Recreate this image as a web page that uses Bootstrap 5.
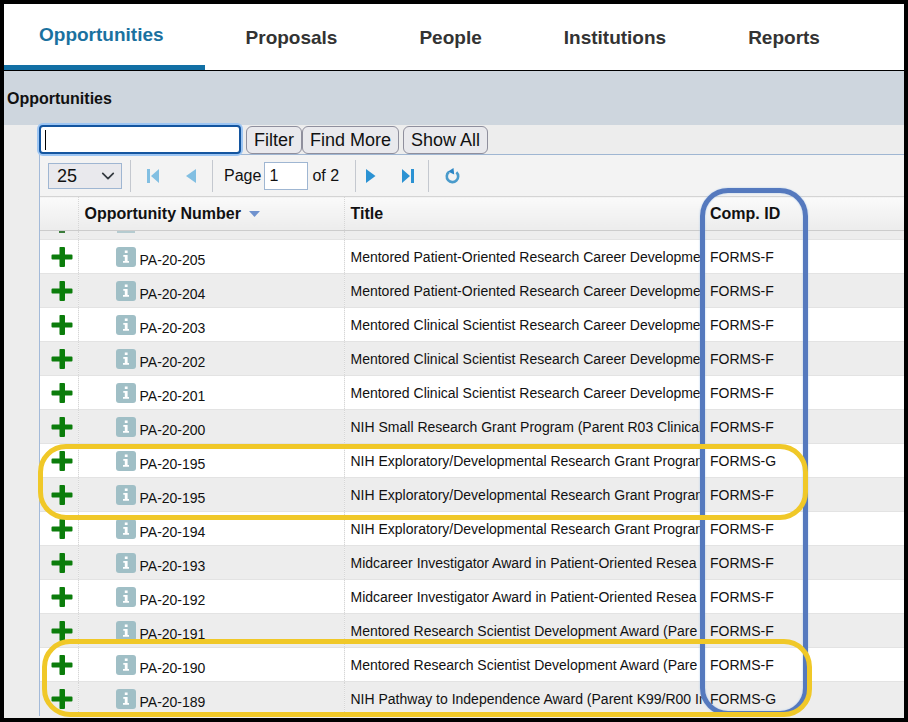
<!DOCTYPE html>
<html lang="en">
<head>
<meta charset="utf-8">
<meta name="viewport" content="width=device-width, initial-scale=1">
<title>Opportunities</title>
<link href="https://cdn.jsdelivr.net/npm/bootstrap@5.3.0/dist/css/bootstrap.min.css" rel="stylesheet">
<style>
  body { font-family: "Liberation Sans", Arial, sans-serif; font-size: 14px; color: #111; background: #ededed; border: 4px solid #000; }
  .main-tabs { border-bottom: 1px solid #000; }
  .main-tabs .nav-link { display: flex; align-items: center; height: 66px; padding: 2px 41px 0; font-size: 19px; font-weight: 700; color: #333; }
  .main-tabs .nav-link.active { padding-left: 35px; color: #1a719f; border-bottom: 5px solid #1270a5; }
  .page-heading { background: #ced6de; height: 54px; font-size: 16px; padding: 2px 3px 0; }
  .work-area { padding: 0 0 2px 35px; }
  .search-row { height: 29px; }
  .search-box { width: 202px; height: 29px; margin-right: 5px; border: 2px solid #14559f; border-radius: 4px; box-shadow: 0 0 0 2px #9cc5f3;
    background: linear-gradient(#000, #000) 4px center / 1px 20px no-repeat #fff; }
  .search-box:focus { border-color: #14559f; box-shadow: 0 0 0 2px #9cc5f3; }
  .tool-btn { height: 28px; padding: 0 7px; font-size: 18px; line-height: 24px; color: #111; background: #e9e9ed; border: 1px solid #8f8f9d; border-radius: 6px; }
  .grid-panel { border-left: 1px solid #a3bad9; border-top: 1px solid #9fb6d2; background: #f3f3f3; }
  .pager { height: 41px; padding-left: 8px; font-size: 16px; }
  .page-size { width: 74px; height: 26px; padding: 0 8px; font-size: 18px; line-height: 24px; color: #111; border: 1px solid #9fb6d2; border-radius: 0; background-color: #e9e9ed;
    background-position: right 6px center; background-size: 14px 14px; }
  .page-no { width: 44px; height: 28px; padding: 0 4px; font-size: 16px; color: #111; border: 1px solid #9fb6d2; border-radius: 0; }
  .rule { width: 1px; height: 32px; background: #c4c8cf; }
  .pager-group { display: flex; align-items: center; gap: 26px; padding: 0 16px; }
  .pager-group.forward { padding: 0 14px 0 10px; gap: 26px; }
  .page-label { padding: 0 3px 0 11px; }
  .icon-btn { display: flex; padding: 0; border: 0; background: none; color: #2b92d3; }
  .icon-btn:disabled { color: #82bfe2; opacity: 1; }
  .grid-table { table-layout: fixed; margin: 0; color: #111; border-top: 1px solid #d4d4d4; }
  .grid-table th { height: 34px; padding: 0 6px; font-size: 16px; font-weight: 700; vertical-align: middle; border: 0; border-bottom: 1px solid #ccc; background: linear-gradient(#fafafa, #ececec); color: #111; }
  .grid-table td { height: 34px; padding: 0 6px; line-height: 18px; vertical-align: middle; border: 0; border-top: 1px solid #e3e3e3; background: #fff; white-space: nowrap; overflow: hidden; }
  .grid-table tr > :nth-child(-n+2) { border-right: 1px dotted #d6d6d6; }
  .grid-table tbody tr:nth-child(odd) td { background: #ededed; }
  .grid-table tr > :nth-child(3) { padding-right: 0; }
  .grid-table .cut td { height: 9px; border-top: 0; font-size: 0; line-height: 0; vertical-align: top; }
  .cut-edge { display: block; height: 2px; margin-left: 13px; width: 6px; background: #3b7c3b; }
  .cut-edge.pale { width: 18px; margin-left: 32px; background: #b5cbd0; }
  .add-col { width: 38px; } .num-col { width: 266px; } .comp-col { width: 200px; }
  .sort-mark { margin-left: 4px; }
  .expand { display: block; margin-left: 5px; padding: 0; border: 0; background: none; line-height: 0; color: #0b7d0b; }
  .num { display: flex; align-items: center; gap: 4px; padding-left: 31px; }
  .num svg { flex: none; }
  .num span { padding-top: 6px; }
  .ring { position: absolute; pointer-events: none; border: 5px solid #f0c828; border-radius: 28px; }
  .ring-blue { right: 96px; top: 63px; width: 108px; bottom: 2px; border-color: #5579be; box-shadow: 0 0 2px #a9c8ea, inset 0 0 2px #a9c8ea; }
  .ring-first { left: 34px; right: 96px; bottom: 198px; height: 76px; }
  .ring-second { left: 38px; right: 92px; bottom: 1px; height: 78px; }
</style>
<script src="https://cdn.jsdelivr.net/npm/bootstrap@5.3.0/dist/js/bootstrap.bundle.min.js"></script>
</head>
<body class="min-vh-100 overflow-hidden">
<svg class="d-none" aria-hidden="true">
  <symbol id="plus" viewBox="0 0 22 20"><path fill="currentColor" d="M9 0h4q1 0 1 1v6.500h6.500q1 0 1 1v3q0 1-1 1H14V19q0 1-1 1H9.500q-1 0-1-1v-6.500H1.500q-1 0-1-1v-3q0-1 1-1h7V1q0-1 .5-1z"/></symbol>
  <symbol id="info" viewBox="0 0 20 20"><rect width="20" height="20" rx="3" fill="#a0bfc6"/><path fill="#fff" d="M8.800 3.500h2.800v2.500H8.800zM7.300 8h4.300v6h1.400v1.700H7V14h1.800V9.700H7.300z"/></symbol>
</svg>

<nav class="main-tabs bg-white" aria-label="Main">
  <div class="nav flex-nowrap">
    <a class="nav-link active" href="#" aria-current="page">Opportunities</a>
    <a class="nav-link" href="#">Proposals</a>
    <a class="nav-link" href="#">People</a>
    <a class="nav-link" href="#">Institutions</a>
    <a class="nav-link" href="#">Reports</a>
  </div>
</nav>

<h1 class="page-heading d-flex align-items-center fw-bold m-0">Opportunities</h1>

<main class="work-area position-relative">
  <form class="search-row d-flex align-items-center">
    <input class="form-control search-box flex-shrink-0" type="text" aria-label="Filter text">
    <div class="d-flex">
      <button class="btn tool-btn" type="button">Filter</button>
      <button class="btn tool-btn me-1" type="button">Find More</button>
      <button class="btn tool-btn" type="button">Show All</button>
    </div>
  </form>

  <section class="grid-panel">
    <div class="pager d-flex align-items-center">
      <select class="form-select page-size" aria-label="Rows per page"><option>25</option><option>50</option></select>
      <div class="rule ms-2"></div>
      <div class="pager-group">
        <button class="icon-btn" type="button" disabled aria-label="First page"><svg width="12" height="14" viewBox="0 0 12 14" fill="currentColor"><path d="M0 0h3v14H0zM12 0v14L4 7z"/></svg></button>
        <button class="icon-btn" type="button" disabled aria-label="Previous page"><svg width="11" height="14" viewBox="0 0 11 14" fill="currentColor"><path d="M11 0v14L1 7z"/></svg></button>
      </div>
      <div class="rule"></div>
      <label class="page-label" for="pageNo">Page</label>
      <input class="form-control page-no" id="pageNo" type="text" value="1">
      <span class="ps-1">of 2</span>
      <div class="rule ms-3"></div>
      <div class="pager-group forward">
        <button class="icon-btn" type="button" aria-label="Next page"><svg width="10" height="14" viewBox="0 0 10 14" fill="currentColor"><path d="M0 0l9.500 7L0 14z"/></svg></button>
        <button class="icon-btn" type="button" aria-label="Last page"><svg width="12" height="14" viewBox="0 0 12 14" fill="currentColor"><path d="M0 0l8 7-8 7zM9 0h3v14H9z"/></svg></button>
      </div>
      <div class="rule me-3"></div>
      <button class="icon-btn" type="button" aria-label="Refresh"><svg width="15" height="16" viewBox="0 0 15 16"><path d="M4 3.900A5.700 5.700 0 1 0 11.400 4.300" fill="none" stroke="#4a9bcb" stroke-width="2.600"/><path d="M3 3.600L8.500 0l.7 6.500z" fill="#2b86c6"/></svg></button>
    </div>

    <table class="table grid-table">
      <colgroup><col class="add-col"><col class="num-col"><col><col class="comp-col"></colgroup>
      <thead><tr><th></th><th>Opportunity Number <svg class="sort-mark" width="11" height="7" viewBox="0 0 11 7"><path d="M0 0h11L5.500 6z" fill="#6f92ce"/></svg></th><th>Title</th><th>Comp. ID</th></tr></thead>
      <tbody id="rows"><tr class="cut"><td><i class="cut-edge"></i></td><td><i class="cut-edge pale"></i></td><td></td><td></td></tr></tbody>
    </table>
  </section>
  <div class="ring ring-blue"></div>
  <div class="ring ring-first"></div>
  <div class="ring ring-second"></div>
</main>
<script>
  const patient = "Mentored Patient-Oriented Research Career Developme";
  const clinical = "Mentored Clinical Scientist Research Career Developme";
  const exploratory = "NIH Exploratory/Developmental Research Grant Program";
  const midcareer = "Midcareer Investigator Award in Patient-Oriented Resea";
  const scientist = "Mentored Research Scientist Development Award (Pare";
  const data = [
    ["205", patient, "F"], ["204", patient, "F"], ["203", clinical, "F"], ["202", clinical, "F"], ["201", clinical, "F"],
    ["200", "NIH Small Research Grant Program (Parent R03 Clinical", "F"],
    ["195", exploratory, "G"], ["195", exploratory, "F"], ["194", exploratory, "F"],
    ["193", midcareer, "F"], ["192", midcareer, "F"], ["191", scientist, "F"], ["190", scientist, "F"],
    ["189", "NIH Pathway to Independence Award (Parent K99/R00 In", "G"]
  ];
  document.getElementById("rows").insertAdjacentHTML("beforeend", data.map(([n, title, form]) => `
    <tr><td><button class="expand" type="button" aria-label="Expand PA-20-${n}"><svg width="22" height="20"><use href="#plus"/></svg></button></td>
    <td><div class="num"><svg width="20" height="20"><use href="#info"/></svg><span>PA-20-${n}</span></div></td>
    <td>${title}</td><td>FORMS-${form}</td></tr>`).join(""));
</script>
</body>
</html>
